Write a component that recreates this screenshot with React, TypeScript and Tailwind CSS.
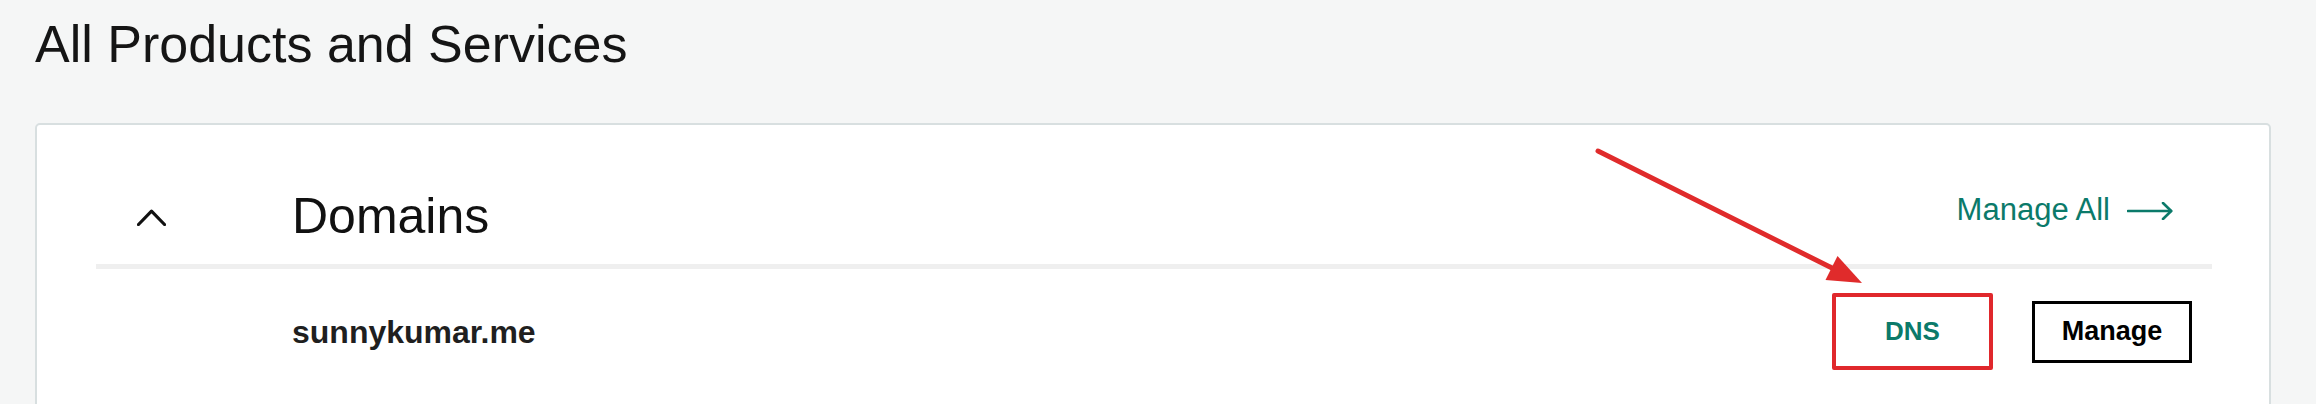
import React from 'react'

function ChevronUp() {
  return (
    <svg width="29" height="17" viewBox="0 0 29 17" fill="none">
      <polyline points="1.5,15.5 14.5,2.2 27.5,15.5" stroke="#111" strokeWidth="3.2" strokeLinecap="round" strokeLinejoin="round" />
    </svg>
  )
}

function ArrowRight() {
  return (
    <svg width="46" height="18" viewBox="0 0 46 18" fill="none" className="mt-[3px]">
      <line x1="1" y1="9" x2="44" y2="9" stroke="#0b7a6a" strokeWidth="2.6" strokeLinecap="round" />
      <polyline points="36,1 44.2,9 36,17" stroke="#0b7a6a" strokeWidth="2.6" strokeLinecap="round" strokeLinejoin="round" />
    </svg>
  )
}

export default function App() {
  return (
    <div className="relative h-[404px] w-full overflow-hidden bg-[#f5f6f6] font-['Liberation_Sans',Arial,sans-serif]">
      <div className="pl-[35px] pr-[45px] pt-[18px]">
        <h1 className="text-[52px] leading-[52px] font-normal text-[#151515]">All Products and Services</h1>

        <div className="mt-[53px] h-[300px] rounded-[5px] border-2 border-[#d8dfe0] bg-white pl-[59px] pr-[57px]">
          {/* header */}
          <div className="flex items-start pt-[66px] pb-[23px]">
            <div className="w-[196px] shrink-0 pl-[41px] pt-[18px]">
              <ChevronUp />
            </div>
            <div className="text-[50px] leading-[50px] text-[#111]">Domains</div>
            <a className="ml-auto mr-[39px] mt-[3px] flex items-center gap-[17px] text-[31px] leading-[31px] text-[#0b7a6a]">
              <span>Manage All</span>
              <ArrowRight />
            </a>
          </div>

          <div className="h-[5px] bg-[#efefef]" />

          {/* domain row */}
          <div className="flex items-center pt-[24px] pr-[20px]">
            <div className="w-[196px] shrink-0" />
            <div className="text-[32px] leading-[32px] font-bold text-[#1f1f1f]">sunnykumar.me</div>
            <div className="ml-auto flex items-center gap-[39px]">
              <button className="flex h-[77px] w-[161px] items-center justify-center rounded-[2px] border-4 border-[#e0282c] bg-white text-[26px] font-bold text-[#0b7a6a]">
                DNS
              </button>
              <button className="flex h-[62px] w-[160px] items-center justify-center border-[3px] border-black bg-white text-[27px] font-bold text-black">
                Manage
              </button>
            </div>
          </div>
        </div>
      </div>

      {/* annotation arrow */}
      <svg className="pointer-events-none absolute left-0 top-0" width="2316" height="404" viewBox="0 0 2316 404">
        <line x1="1598" y1="151" x2="1834" y2="269" stroke="#e02b2b" strokeWidth="5" strokeLinecap="round" />
        <polygon points="1862,283 1825.5,280 1837.5,256" fill="#e02b2b" />
      </svg>
    </div>
  )
}
